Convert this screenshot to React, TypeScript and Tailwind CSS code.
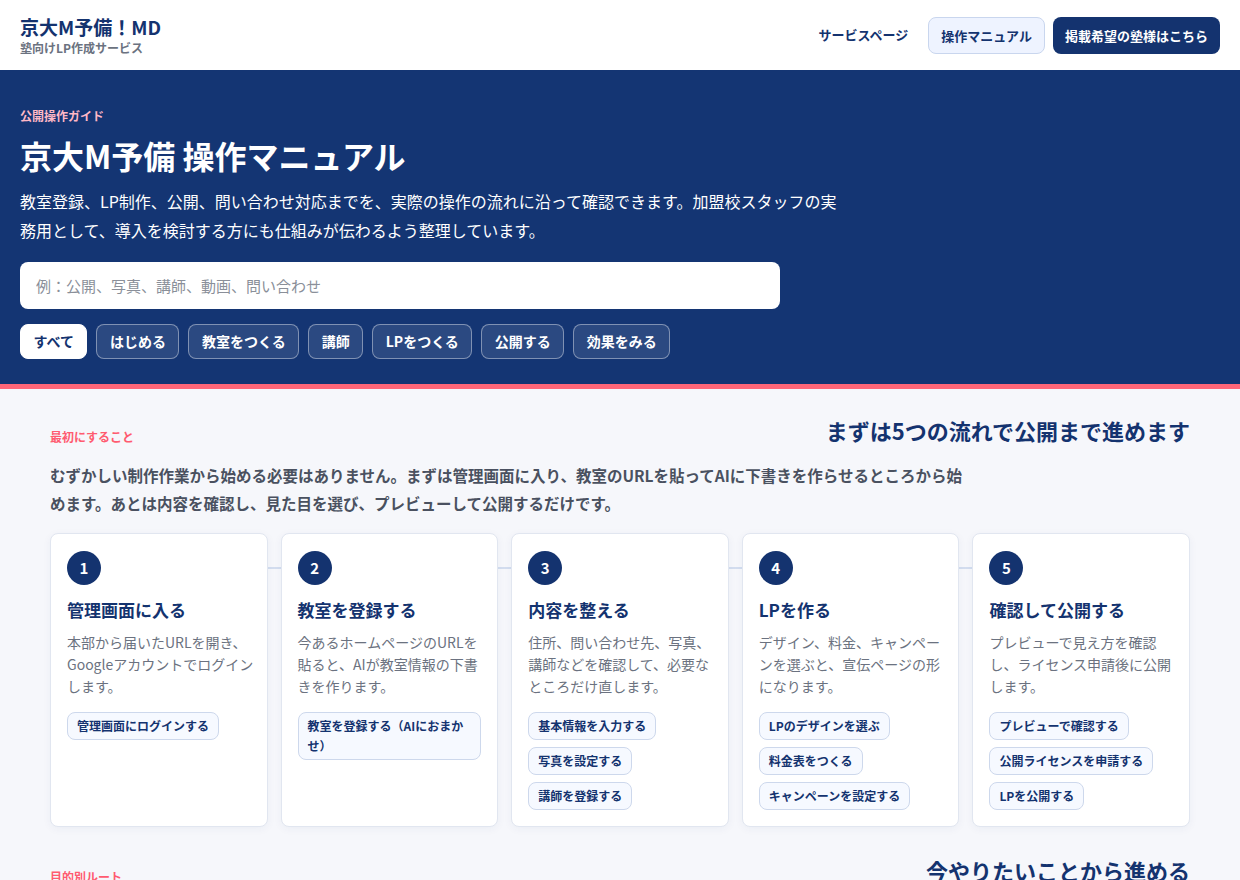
const font = { fontFamily: '"Noto Sans CJK JP", "Noto Sans", sans-serif' };

const chips = ["すべて", "はじめる", "教室をつくる", "講師", "LPをつくる", "公開する", "効果をみる"];

const steps = [
  {
    no: 1,
    title: "管理画面に入る",
    desc: "本部から届いたURLを開き、Googleアカウントでログインします。",
    actions: ["管理画面にログインする"],
  },
  {
    no: 2,
    title: "教室を登録する",
    desc: "今あるホームページのURLを貼ると、AIが教室情報の下書きを作ります。",
    actions: ["教室を登録する（AIにおまかせ）"],
  },
  {
    no: 3,
    title: "内容を整える",
    desc: "住所、問い合わせ先、写真、講師などを確認して、必要なところだけ直します。",
    actions: ["基本情報を入力する", "写真を設定する", "講師を登録する"],
  },
  {
    no: 4,
    title: "LPを作る",
    desc: "デザイン、料金、キャンペーンを選ぶと、宣伝ページの形になります。",
    actions: ["LPのデザインを選ぶ", "料金表をつくる", "キャンペーンを設定する"],
  },
  {
    no: 5,
    title: "確認して公開する",
    desc: "プレビューで見え方を確認し、ライセンス申請後に公開します。",
    actions: ["プレビューで確認する", "公開ライセンスを申請する", "LPを公開する"],
  },
];

const routes = [
  { title: "写真を差し替えたい", desc: "教室写真や講師写真を新しくします。" },
  { title: "料金を変えたい", desc: "料金表とキャンペーンを更新します。" },
  { title: "問い合わせを確認したい", desc: "届いた問い合わせを一覧で確認します。" },
];

function StepCard({ step }: { step: (typeof steps)[number] }) {
  return (
    <div className="relative z-10 flex flex-col rounded-lg border border-[#e1e6f0] bg-white pt-[17px] pr-[10px] pb-4 pl-[16px] shadow-[0_2px_8px_rgba(20,50,110,0.05)]">
      <div className="flex h-[34px] w-[34px] items-center justify-center rounded-full bg-[#14336f] text-[15px] font-bold text-white">
        {step.no}
      </div>
      <h3 className="mt-[13px] text-[17px] font-bold leading-[24px] text-[#14336f]">{step.title}</h3>
      <p className="mt-[9px] text-[14px] leading-[22px] text-[#6b7280]">{step.desc}</p>
      <div className="mt-[15px] flex flex-col items-start gap-[7px] pr-[6px]">
        {step.actions.map((a) => (
          <span
            key={a}
            className="rounded-lg border border-[#cdd8ec] bg-[#f6f9ff] px-[9px] py-[3px] text-[12px] font-bold leading-5 text-[#14336f]"
          >
            {a}
          </span>
        ))}
      </div>
    </div>
  );
}

export default function App() {
  return (
    <div style={font} className="min-h-screen bg-[#f6f7fb]">
      {/* header */}
      <header className="flex h-[70px] items-center justify-between bg-white px-5">
        <div className="flex flex-col">
          <span className="text-[19px] font-bold leading-[24px] text-[#14336f]">京大M予備！MD</span>
          <span className="mt-[1px] text-[12px] font-bold leading-4 text-[#6b7280]">塾向けLP作成サービス</span>
        </div>
        <nav className="flex items-center">
          <a className="mr-5 text-[13px] font-bold text-[#14336f]">サービスページ</a>
          <a className="mr-2 rounded-lg border border-[#c9d6ee] bg-[#eef3ff] px-3 py-[9px] text-[13px] font-bold leading-[17px] text-[#14336f]">
            操作マニュアル
          </a>
          <a className="rounded-lg bg-[#14336f] px-3 py-[10px] text-[13px] font-bold leading-[17px] text-white">
            掲載希望の塾様はこちら
          </a>
        </nav>
      </header>

      {/* hero */}
      <section className="border-b-[5px] border-[#ff6678] bg-[#143573] px-5 pt-[38px] pb-[25px]">
        <p className="text-[12px] font-bold leading-4 text-[#ffb8c6]">公開操作ガイド</p>
        <h1 className="mt-[11px] text-[32px] font-bold leading-[40px] text-white">京大M予備 操作マニュアル</h1>
        <p className="mt-[12px] max-w-[830px] text-[16px] leading-[29px] text-white">
          教室登録、LP制作、公開、問い合わせ対応までを、実際の操作の流れに沿って確認できます。加盟校スタッフの実務用として、導入を検討する方にも仕組みが伝わるよう整理しています。
        </p>
        <input
          placeholder="例：公開、写真、講師、動画、問い合わせ"
          className="mt-[17px] h-[47px] w-[760px] rounded-lg bg-white px-4 text-[15px] text-[#333] outline-none placeholder:text-[#8a8f99]"
        />
        <div className="mt-[15px] flex gap-[9px]">
          {chips.map((c, i) => (
            <button
              key={c}
              className={
                i === 0
                  ? "h-[35px] rounded-lg border border-white bg-white px-[12.5px] text-[14px] font-bold text-[#14336f]"
                  : "h-[35px] rounded-lg border border-white/40 bg-white/10 px-[12.5px] text-[14px] font-bold text-white"
              }
            >
              {c}
            </button>
          ))}
        </div>
      </section>

      {/* first steps */}
      <main className="px-[50px] pt-[26px] pb-16">
        <section>
          <div className="flex items-end justify-between">
            <span className="text-[12px] font-bold leading-4 text-[#ff5b70]">最初にすること</span>
            <h2 className="text-[22px] font-bold leading-[30px] text-[#14336f]">まずは5つの流れで公開まで進めます</h2>
          </div>
          <p className="mt-[16px] max-w-[920px] text-[15.5px] font-bold leading-[28px] text-[#4a5160]">
            むずかしい制作作業から始める必要はありません。まずは管理画面に入り、教室のURLを貼ってAIに下書きを作らせるところから始めます。あとは内容を確認し、見た目を選び、プレビューして公開するだけです。
          </p>
          <div className="relative mt-4 grid grid-cols-5 gap-[13px]">
            <div className="absolute top-[34px] right-[40px] left-[40px] h-[2px] bg-[#d3ddef]" />
            {steps.map((s) => (
              <StepCard key={s.no} step={s} />
            ))}
          </div>
        </section>

        <section className="mt-[28px]">
          <div className="flex items-end justify-between">
            <span className="text-[12px] font-bold leading-4 text-[#ff5b70]">目的別ルート</span>
            <h2 className="text-[22px] font-bold leading-[30px] text-[#14336f]">今やりたいことから進める</h2>
          </div>
          <div className="mt-4 grid grid-cols-3 gap-[13px]">
            {routes.map((r) => (
              <div key={r.title} className="rounded-lg border border-[#e1e6f0] bg-white p-[17px]">
                <h3 className="text-[17px] font-bold text-[#14336f]">{r.title}</h3>
                <p className="mt-2 text-[14px] leading-[22px] text-[#6b7280]">{r.desc}</p>
              </div>
            ))}
          </div>
        </section>
      </main>
    </div>
  );
}
